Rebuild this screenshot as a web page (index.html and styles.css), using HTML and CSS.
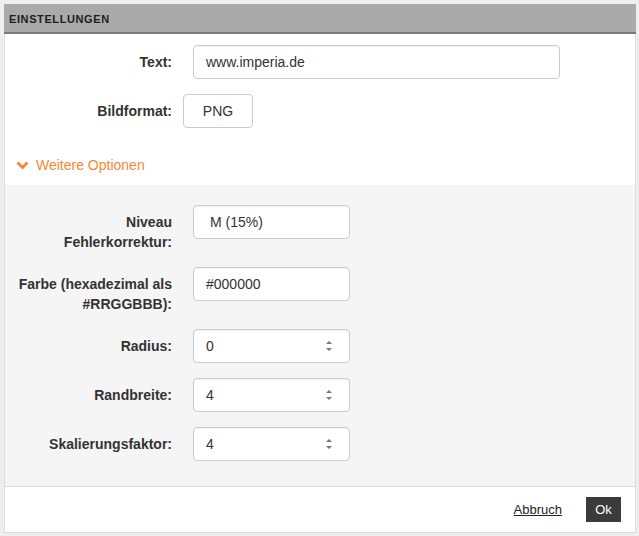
FILE: index.html
```html
<!DOCTYPE html>
<html lang="de">
<head>
<meta charset="utf-8">
<title>Einstellungen</title>
<link rel="stylesheet" href="styles.css">
</head>
<body>
<div class="panel">
  <div class="panel-head">EINSTELLUNGEN</div>
  <div class="form main">
    <label class="lbl">Text:</label>
    <div class="ctl"><div class="field wide">www.imperia.de</div></div>
    <label class="lbl">Bildformat:</label>
    <div class="ctl"><div class="btn-fmt">PNG</div></div>
  </div>
  <div class="more">
    <svg class="chev" width="13" height="9" viewBox="0 0 13 9"><path d="M1.5 1.5 L6.5 6.5 L11.5 1.5" fill="none" stroke="#f0893a" stroke-width="3"/></svg>
    <span>Weitere Optionen</span>
  </div>
  <div class="form extra">
    <label class="lbl">Niveau Fehlerkorrektur:</label>
    <div class="ctl"><div class="field narrow sel">M (15%)</div></div>
    <label class="lbl">Farbe (hexadezimal als #RRGGBBB):</label>
    <div class="ctl"><div class="field narrow">#000000</div></div>
    <label class="lbl">Radius:</label>
    <div class="ctl"><div class="field narrow num"><span>0</span><span class="spin"><i class="up"></i><i class="dn"></i></span></div></div>
    <label class="lbl">Randbreite:</label>
    <div class="ctl"><div class="field narrow num"><span>4</span><span class="spin"><i class="up"></i><i class="dn"></i></span></div></div>
    <label class="lbl">Skalierungsfaktor:</label>
    <div class="ctl"><div class="field narrow num"><span>4</span><span class="spin"><i class="up"></i><i class="dn"></i></span></div></div>
  </div>
  <div class="foot">
    <a class="cancel" href="#">Abbruch</a>
    <span class="ok">Ok</span>
  </div>
</div>
</body>
</html>
```
FILE: styles.css
```css
html, body {
  margin: 0;
  padding: 0;
}
body {
  background: #efeeee;
  font-family: "Liberation Sans", Arial, sans-serif;
  font-size: 14px;
  color: #333;
  padding: 4px 3px 4px 4px;
  width: 632px;
}
.panel {
  background: #fff;
  border: 1px solid #dcdcdc;
  border-top: 0;
}
.panel-head {
  background: #aaaaaa;
  margin: 0 -1px;
  height: 28px;
  border-bottom: 2px solid #7b7b7b;
  font-size: 11px;
  font-weight: bold;
  letter-spacing: 0.6px;
  line-height: 30px;
  padding-left: 5px;
  color: #1e1e1e;
}
.form {
  display: grid;
  grid-template-columns: 157px auto;
  column-gap: 21px;
  row-gap: 15px;
  padding-left: 10px;
  align-items: start;
}
.main {
  padding-top: 11px;
}
.lbl {
  text-align: right;
  font-weight: bold;
  padding-top: 7px;
  line-height: 20px;
}
.ctl {
  display: flex;
}
.field {
  box-sizing: border-box;
  height: 34px;
  border: 1px solid #cccccc;
  border-radius: 4px;
  background: #fff;
  box-shadow: inset 0 1px 1px rgba(0,0,0,0.06);
  padding: 0 12px;
  line-height: 32px;
  color: #333;
}
.wide {
  width: 367px;
}
.narrow {
  width: 157px;
}
.sel {
  padding-left: 16px;
}
.num {
  display: flex;
  justify-content: space-between;
  align-items: center;
  padding-right: 17px;
}
.spin {
  display: flex;
  flex-direction: column;
  align-items: center;
  gap: 4px;
}
.spin i {
  display: block;
  width: 0;
  height: 0;
  border-left: 3px solid transparent;
  border-right: 3px solid transparent;
}
.spin .up {
  border-bottom: 3px solid #777;
}
.spin .dn {
  border-top: 3px solid #777;
}
.btn-fmt {
  box-sizing: border-box;
  height: 34px;
  width: 70px;
  margin-left: -10px;
  border: 1px solid #cccccc;
  border-radius: 4px;
  text-align: center;
  line-height: 32px;
  color: #333;
}
.more {
  display: flex;
  align-items: center;
  height: 20px;
  padding: 27px 0 10px 11px;
  color: #f0893a;
  font-size: 14px;
}
.more .chev {
  margin-right: 7px;
}
.extra {
  background: #f5f5f5;
  padding-top: 20px;
  padding-bottom: 25px;
}
.foot {
  border-top: 1px solid #dcdcdc;
  height: 45px;
  display: flex;
  align-items: center;
  justify-content: flex-end;
  padding-right: 14px;
}
.cancel {
  color: #222;
  font-size: 13px;
  text-decoration: underline;
  margin-right: 24px;
}
.ok {
  background: #3b3b3b;
  color: #fff;
  font-size: 13px;
  width: 35px;
  height: 25px;
  line-height: 25px;
  text-align: center;
}
```
